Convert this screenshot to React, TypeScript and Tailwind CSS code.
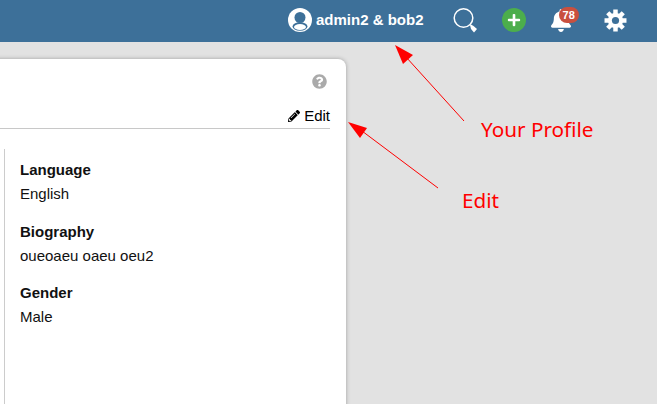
import React from "react";
import { FaBell, FaPencilAlt, FaPlus, FaQuestionCircle } from "react-icons/fa";

const fields = [
  { label: "Language", value: "English" },
  { label: "Biography", value: "oueoaeu oaeu oeu2" },
  { label: "Gender", value: "Male" },
];

function gearPoints() {
  const pts: string[] = [];
  for (let i = 0; i < 8; i++) {
    const a = (i * Math.PI) / 4;
    const corners: [number, number][] = [
      [7.6, -0.3],
      [11.2, -0.2],
      [11.2, 0.2],
      [7.6, 0.3],
    ];
    for (const [r, d] of corners) {
      pts.push(`${(11.5 + r * Math.sin(a + d)).toFixed(2)} ${(11.5 - r * Math.cos(a + d)).toFixed(2)}`);
    }
  }
  return "M" + pts.join("L") + "Z";
}

function UserIcon() {
  return (
    <svg width="24" height="24" viewBox="0 0 24 24">
      <circle cx="12" cy="12" r="12" fill="white" />
      <circle cx="12" cy="9.5" r="5.5" fill="#3d7099" />
      <ellipse cx="12" cy="18.5" rx="7.5" ry="4.2" fill="#3d7099" />
      <ellipse cx="12" cy="19" rx="6" ry="3" fill="white" />
    </svg>
  );
}

function Annotations() {
  return (
    <div className="absolute inset-0 pointer-events-none">
      <svg className="absolute left-0 top-0" width="657" height="404">
        <line x1="464" y1="121" x2="406" y2="57" stroke="#ff0000" strokeWidth="1" />
        <polygon points="395,45 413,55 403,64" fill="#ff0000" />
        <line x1="438" y1="188" x2="362" y2="131" stroke="#ff0000" strokeWidth="1" />
        <polygon points="348,122 367,128 360,138" fill="#ff0000" />
      </svg>
      <div className="absolute left-[481px] top-[115px] text-[20.7px] leading-7 text-[#ff0000] font-['Noto_Sans',sans-serif]">
        Your Profile
      </div>
      <div className="absolute left-[462px] top-[186px] text-[20.7px] leading-7 text-[#ff0000] font-['Noto_Sans',sans-serif]">
        Edit
      </div>
    </div>
  );
}

export default function App() {
  return (
    <div className="relative h-[404px] w-[657px] overflow-hidden bg-[#e2e2e2] font-['Liberation_Sans',sans-serif]">
      <header className="flex h-[42px] items-center bg-[#3d7099] pb-[2px] pl-[288px] text-white">
        <UserIcon />
        <span className="ml-1 text-[15px] font-bold">admin2 &amp; bob2</span>
        <svg className="ml-[29px]" width="26" height="26" viewBox="0 0 26 26">
          <circle cx="10.5" cy="11" r="9.3" fill="none" stroke="white" strokeWidth="1.5" />
          <path d="M17 18 L18 17.5 L20.5 19 L24 22 L21 25.5 L18 22 Z" fill="white" />
        </svg>
        <span className="ml-[23px] flex h-6 w-6 items-center justify-center rounded-full bg-[#4cae4c]">
          <FaPlus className="h-[14px] w-[14px]" />
        </span>
        <span className="relative ml-[25px]">
          <FaBell className="h-[23px] w-5" />
          <span className="absolute left-2 top-[-2px] rounded-full bg-[#c9503f] px-1 text-[11px] leading-4 font-bold">
            78
          </span>
        </span>
        <svg className="ml-[33px]" width="23" height="23" viewBox="0 0 23 23">
          <path d={gearPoints()} fill="white" />
          <circle cx="11.5" cy="11.5" r="3.6" fill="#3d7099" />
        </svg>
      </header>

      <main className="ml-[-40px] mt-[17px] h-[400px] w-[386px] rounded-lg bg-white pl-[44px] pr-4 pt-[15px] shadow-[0_0_4px_rgba(0,0,0,0.3)]">
        <div className="flex justify-end pr-[3px]">
          <FaQuestionCircle className="h-[15px] w-[15px] text-[#aaaaaa]" />
        </div>
        <div className="ml-[-44px] mt-[17px] flex h-[23px] items-center justify-end border-b border-[#c8c8c8] pb-[2px] text-[15px] text-black">
          <FaPencilAlt className="mr-1 h-3 w-3" />
          Edit
        </div>
        <div className="mt-5 h-[300px] border-l border-[#cccccc] pl-[15px] pt-[10px]">
          {fields.map((f) => (
            <div key={f.label} className="mb-[15.5px] text-[15px] leading-[22px] text-[#111111]">
              <div className="mb-[2px] font-bold">{f.label}</div>
              <div>{f.value}</div>
            </div>
          ))}
        </div>
      </main>

      <Annotations />
    </div>
  );
}
